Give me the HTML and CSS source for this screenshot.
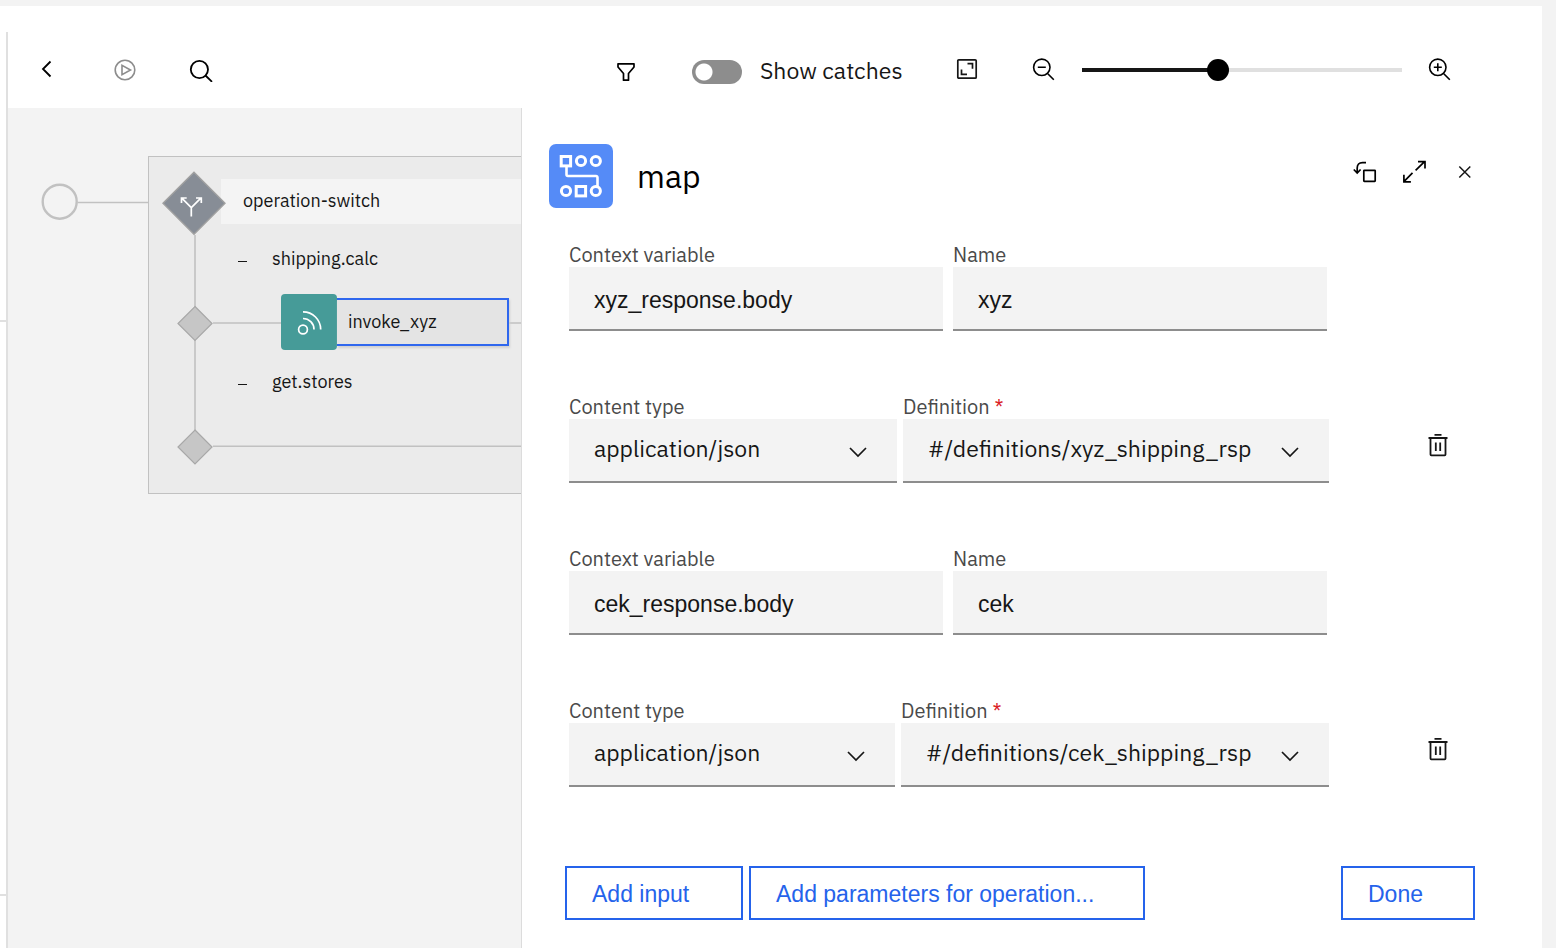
FILE: index.html
```html
<!DOCTYPE html>
<html lang="en">
<head>
<meta charset="utf-8">
<meta name="viewport" content="width=device-width, initial-scale=1">
<title>Assembly editor</title>
<link rel="stylesheet" href="styles.css">
</head>
<body>
<div class="app">
  <div class="rail"><span class="rail-tick rail-tick-top"></span><span class="rail-tick rail-tick-bottom"></span></div>
  <div class="editor">
    <header class="toolbar">
      <div class="tools-left">
        <button class="icon-button" aria-label="Back"><svg width="24" height="24" viewBox="0 0 24 24"><path d="M15.500 3.500 8 11l7.500 7.500" fill="none" stroke="#000" stroke-width="1.800"/></svg></button>
        <button class="icon-button" aria-label="Test"><svg width="24" height="24" viewBox="0 0 24 24" fill="none" stroke="#8d8d8d" stroke-width="1.600"><circle cx="13" cy="12" r="9.800"/><path d="M10 7.300v9.400l8.500-4.700z"/></svg></button>
        <button class="icon-button" aria-label="Search"><svg width="24" height="24" viewBox="0 0 24 24" fill="none" stroke="#000" stroke-width="1.800"><circle cx="10.400" cy="11.500" r="8.600"/><path d="m16.500 17.500 6.500 6.300"/></svg></button>
      </div>
      <div class="tools-right">
        <button class="icon-button filter" aria-label="Filter"><svg width="24" height="24" viewBox="0 0 24 24"><path d="M3 5.800h16v3.200l-5.500 6.500v6.700h-5v-6.700L3 9z" fill="none" stroke="#000" stroke-width="1.700" stroke-linejoin="round"/></svg></button>
        <label class="catch"><input type="checkbox" role="switch" class="toggle"><span>Show catches</span></label>
        <button class="icon-button" aria-label="Fit to screen"><svg width="24" height="24" viewBox="0 0 24 24" fill="none" stroke="#161616" stroke-width="1.700"><rect x="2.800" y="1.800" width="18.400" height="18.400" rx="1"/><path d="M12.500 5.700h5v5M6.500 11.500v4.800h5.500"/></svg></button>
        <div class="zoom">
          <button class="icon-button" aria-label="Zoom out"><svg width="24" height="24" viewBox="0 0 24 24" fill="none" stroke="#000" stroke-width="1.600"><circle cx="9.800" cy="9.300" r="8.200"/><path d="m15.800 15.800 6 6M5.800 9.300h8"/></svg></button>
          <input class="zoom-slider" type="range" min="0" max="100" value="42" aria-label="Zoom level">
          <button class="icon-button" aria-label="Zoom in"><svg width="24" height="24" viewBox="0 0 24 24" fill="none" stroke="#000" stroke-width="1.600"><circle cx="9.800" cy="9.300" r="8.200"/><path d="m15.800 15.800 6 6M5.800 9.300h8M9.800 5.300v8"/></svg></button>
        </div>
      </div>
    </header>
    <div class="workspace">
      <section class="canvas" aria-label="Flow">
        <div class="group-box"></div>
        <svg class="wires" width="100%" height="100%">
          <g fill="none" stroke="#c1c1c1">
            <circle cx="51.700" cy="93.700" r="17" stroke-width="2.400"/>
            <path d="M69.500 94.500H141M187 127v202M205 215h71M501 215h60M205 338.300h800" stroke-width="1.600"/>
          </g>
          <path d="M186 64.300l31 31-31 31-31-31z" fill="#878d96" stroke="#a0a0a0" stroke-width="1.400"/>
          <path d="M187 198.500l17 17-17 17-17-17zM187 322l17 17-17 17-17-17z" fill="#c6c6c6" stroke="#a8a8a8" stroke-width="1.200"/>
          <path d="M183.300 109.500v-8.800l-9.500-9.500M183.300 100.700l9.500-9.500M173.500 96v-5h5.200M188 91h5.300v5" transform="translate(0 -1)" fill="none" stroke="#fff" stroke-width="1.700"/>
        </svg>
        <div class="node node-switch">operation-switch</div>
        <div class="node node-case case-one"><button class="collapse" aria-label="Collapse shipping.calc"></button>shipping.calc</div>
        <button class="node node-invoke">
          <span class="invoke-icon"><svg width="56" height="56" viewBox="0 0 56 56" fill="none" stroke="#fff" stroke-width="1.700"><circle cx="22" cy="35.500" r="4.400"/><path d="M22 24.500A11 11 0 0 1 33 35.500M22 17.800A17.700 17.700 0 0 1 39.700 35.500"/></svg></span>
          <span class="invoke-name">invoke_xyz</span>
        </button>
        <div class="node node-case case-two"><button class="collapse" aria-label="Collapse get.stores"></button>get.stores</div>
      </section>
      <section class="panel" aria-labelledby="panel-title">
        <div class="panel-header">
          <svg class="map-icon" width="64" height="64" viewBox="0 0 64 64"><rect width="64" height="64" rx="7" fill="#558bf7"/><g fill="none" stroke="#fff" stroke-width="3"><rect x="12.200" y="12.500" width="9.400" height="9.400"/><circle cx="32" cy="17" r="4.600"/><circle cx="46.800" cy="17" r="4.600"/><circle cx="17" cy="47" r="4.600"/><rect x="27.200" y="42.500" width="9.400" height="9.400"/><circle cx="46.800" cy="47" r="4.600"/><path d="M17.500 22v8.500a1.500 1.500 0 0 0 1.500 1.500h28a1.500 1.500 0 0 1 1.500 1.500v9" stroke-width="2.600"/></g></svg>
          <h1 id="panel-title">map</h1>
          <div class="panel-tools">
            <button class="icon-button" aria-label="Undock"><svg width="24" height="24" viewBox="0 0 24 24" fill="none" stroke="#000" stroke-width="1.700"><rect x="10.800" y="10.300" width="11.400" height="11" rx=".5"/><path d="M13 2.700H9.500Q4.200 2.700 4.200 8v4.500M.8 9.500l3.400 3.500L7.600 9.500"/></svg></button>
            <button class="icon-button" aria-label="Expand"><svg width="24" height="24" viewBox="0 0 24 24" fill="none" stroke="#000" stroke-width="1.700"><path d="M12.600 10.400 21.800 1.400M15 1.700h7V8.400M9.500 12.900.9 21.700M.9 14.700v7.200h7"/></svg></button>
            <button class="icon-button" aria-label="Close"><svg width="24" height="24" viewBox="0 0 24 24" fill="none" stroke="#161616" stroke-width="1.500"><path d="m6.300 6.500 11 11m0-11-11 11"/></svg></button>
          </div>
        </div>
        <form class="inputs">
          <div class="row">
            <div class="fields fields-pair">
              <div class="field"><label for="cv1">Context variable</label><input id="cv1" type="text" value="xyz_response.body"></div>
              <div class="field"><label for="nm1">Name</label><input id="nm1" type="text" value="xyz"></div>
            </div>
          </div>
          <div class="row">
            <div class="fields fields-xyz">
              <div class="field"><label for="ct1">Content type</label><div class="select"><select id="ct1"><option>application/json</option></select><svg class="chevron" width="20" height="12" viewBox="0 0 20 12"><path d="m2 2 8 8 8-8"/></svg></div></div>
              <div class="field"><label for="df1">Definition <span class="required">*</span></label><div class="select"><select id="df1"><option>#/definitions/xyz_shipping_rsp</option></select><svg class="chevron" width="20" height="12" viewBox="0 0 20 12"><path d="m2 2 8 8 8-8"/></svg></div></div>
            </div>
            <button type="button" class="icon-button delete" aria-label="Delete xyz"><svg width="24" height="24" viewBox="0 0 24 24" fill="none" stroke="#161616" stroke-width="1.800"><path d="M8.500 1.800h7M2.500 5h19M4.500 5v16.500q0 .8.800.8h13.400q.8 0 .8-.8V5M9.800 9.500v8.500M14.200 9.500v8.500"/></svg></button>
          </div>
          <div class="row">
            <div class="fields fields-pair">
              <div class="field"><label for="cv2">Context variable</label><input id="cv2" type="text" value="cek_response.body"></div>
              <div class="field"><label for="nm2">Name</label><input id="nm2" type="text" value="cek"></div>
            </div>
          </div>
          <div class="row">
            <div class="fields fields-cek">
              <div class="field"><label for="ct2">Content type</label><div class="select"><select id="ct2"><option>application/json</option></select><svg class="chevron" width="20" height="12" viewBox="0 0 20 12"><path d="m2 2 8 8 8-8"/></svg></div></div>
              <div class="field"><label for="df2">Definition <span class="required">*</span></label><div class="select"><select id="df2"><option>#/definitions/cek_shipping_rsp</option></select><svg class="chevron" width="20" height="12" viewBox="0 0 20 12"><path d="m2 2 8 8 8-8"/></svg></div></div>
            </div>
            <button type="button" class="icon-button delete" aria-label="Delete cek"><svg width="24" height="24" viewBox="0 0 24 24" fill="none" stroke="#161616" stroke-width="1.800"><path d="M8.500 1.800h7M2.500 5h19M4.500 5v16.500q0 .8.800.8h13.400q.8 0 .8-.8V5M9.800 9.500v8.500M14.200 9.500v8.500"/></svg></button>
          </div>
        </form>
        <footer class="actions">
          <button class="action action-input">Add input</button>
          <button class="action action-parameters">Add parameters for operation...</button>
          <button class="action action-done">Done</button>
        </footer>
      </section>
    </div>
  </div>
</div>
</body>
</html>
```
FILE: styles.css
```css
* { box-sizing: border-box; }

body {
  margin: 0;
  padding: 6px 14px 0 0;
  background: #f3f3f3;
  color: #161616;
  font-family: "IBM Plex Sans", "Noto Sans", sans-serif;
  font-size: 23px;
}

button, input, select { font: inherit; color: inherit; margin: 0; }
button { padding: 0; border: 0; background: none; cursor: pointer; }
svg { display: block; }

.app {
  display: flex;
  min-height: calc(100vh - 6px);
  padding-top: 26px;
  background: #fff;
}

.rail {
  position: relative;
  flex: 0 0 8px;
  border-right: 2px solid #e0e0e0;
}
.rail-tick {
  position: absolute;
  left: 0;
  width: 6px;
  height: 2px;
  background: #e0e0e0;
}
.rail-tick-top { top: 288px; }
.rail-tick-bottom { top: 862px; }

.editor { display: flex; flex: 1; flex-direction: column; min-width: 0; }

.toolbar {
  display: flex;
  align-items: center;
  justify-content: space-between;
  height: 76px;
  padding: 0 90px 0 27px;
}
.icon-button { flex: none; width: 24px; height: 24px; }
.tools-left { display: flex; gap: 53px; }
.tools-right { display: flex; align-items: center; gap: 53px; }
.catch {
  display: flex;
  align-items: center;
  gap: 18px;
  width: 210px;
  line-height: 28px;
  white-space: nowrap;
}
.toggle {
  appearance: none;
  flex: none;
  width: 50px;
  height: 24px;
  margin-top: 3px;
  border-radius: 12px;
  background: radial-gradient(circle at 12px 12px, #fff 8px, #8d8d8d 9px);
}
.toggle:checked { background: radial-gradient(circle at 38px 12px, #fff 8px, #198038 9px); }

.zoom { display: flex; align-items: center; gap: 26px; }
.zoom-slider {
  appearance: none;
  width: 320px;
  height: 24px;
  background: linear-gradient(90deg, #161616 42%, #e0e0e0 42%) center / 100% 4px no-repeat;
}
.zoom-slider::-webkit-slider-thumb {
  appearance: none;
  width: 22px;
  height: 22px;
  border-radius: 50%;
  background: #000;
}

.workspace {
  display: grid;
  flex: 1;
  grid-template-columns: minmax(0, 514fr) minmax(0, 1020fr);
}

.canvas {
  position: relative;
  isolation: isolate;
  overflow: hidden;
  border-right: 1px solid #dcdcdc;
  background: #f3f3f3;
  font-size: 18px;
  line-height: 24px;
}
.group-box {
  position: absolute;
  top: 48px;
  right: 0;
  left: 140px;
  z-index: -2;
  height: 338px;
  border: 1px solid #c1c1c1;
  border-right: 0;
  background: #ebebeb;
}
.wires { position: absolute; inset: 0; }
.node { position: absolute; }
.node-switch {
  top: 71px;
  right: 0;
  left: 213px;
  z-index: -1;
  height: 45px;
  padding: 10px 22px;
  background: #f4f4f4;
}
.node-case { left: 230px; display: flex; align-items: center; gap: 25px; }
.case-one { top: 139px; }
.case-two { top: 262px; }
.collapse { width: 9px; height: 24px; background: linear-gradient(#161616, #161616) 0 14px / 9px 1px no-repeat; }
.node-invoke { top: 186px; left: 273px; display: flex; align-items: center; }
.invoke-icon { border-radius: 4px; background: #469b98; }
.invoke-name {
  width: 172px;
  height: 48px;
  padding-left: 11px;
  border: 2px solid #2f67ee;
  border-left: 0;
  background: #e4e4e4;
  box-shadow: 1px 2px 2px #d0d0d0;
  line-height: 44px;
  text-align: left;
}

.panel { padding-top: 36px; background: #fff; }
.panel-header {
  display: flex;
  align-items: center;
  gap: 24px;
  padding: 0 65px 0 27px;
}
.panel-header h1 {
  margin: 0;
  color: #000;
  font-size: 32px;
  font-weight: 400;
  line-height: 64px;
}
.panel-tools {
  display: flex;
  gap: 26px;
  align-self: flex-start;
  margin-left: auto;
  padding-top: 16px;
}

.inputs { display: grid; gap: 64px; padding: 35px 67px 0 47px; }
.row { display: grid; grid-template-columns: minmax(0, 1fr) 146px; }
.fields { display: grid; gap: 6px; }
.fields-pair { grid-template-columns: 1fr 1fr; gap: 10px; padding-right: 2px; }
.fields-xyz { grid-template-columns: 328fr 426fr; }
.fields-cek { grid-template-columns: 326fr 428fr; }
.field { min-width: 0; }
.field label {
  display: block;
  color: #4a4a4a;
  font-size: 20px;
  line-height: 24px;
}
.required { color: #da1e28; }
.field input,
.field select {
  display: block;
  appearance: none;
  width: 100%;
  height: 64px;
  border: 0;
  border-bottom: 2px solid #8d8d8d;
  border-radius: 0;
  background: #f3f3f3;
}
.field input { padding: 5px 25px 0; font-family: "Liberation Sans", Arial, sans-serif; }
.field select { padding: 0 60px 5px 25px; }
.select { position: relative; }
.chevron {
  position: absolute;
  top: 27px;
  right: 29px;
  fill: none;
  stroke: #161616;
  stroke-width: 1.7;
  pointer-events: none;
}
.delete { align-self: center; justify-self: end; margin: 12px 25px 0 0; }

.actions { display: flex; gap: 6px; padding: 79px 67px 28px 43px; }
.action {
  height: 54px;
  padding: 3px 25px 0;
  border: 2px solid #2563eb;
  color: #2563eb;
  font-family: "Liberation Sans", Arial, sans-serif;
  text-align: left;
  white-space: nowrap;
}
.action-input { width: 178px; }
.action-parameters { width: 396px; }
.action-done { width: 134px; margin-left: auto; }
```
